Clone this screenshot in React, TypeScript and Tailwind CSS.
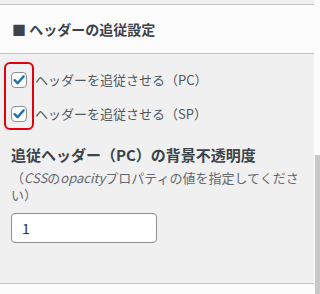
import { FC } from 'react';

const font = { fontFamily: '"Noto Sans CJK JP", "Noto Sans", sans-serif' };

const Check: FC<{ label: string }> = ({ label }) => (
  <label className="flex items-center h-[34px]">
    <span className="flex items-center justify-center w-[16px] h-[16px] ml-[11px] bg-white border border-[#8c8f94] rounded-[4px]">
      <svg width="14" height="14" viewBox="0 0 14 14">
        <path d="M2.6 7.2 L5.6 10.2 L11.6 3.4" fill="none" stroke="#2271b1" strokeWidth="2.4" strokeLinecap="round" strokeLinejoin="round" />
      </svg>
    </span>
    <span className="ml-[8px] text-[13px] text-[#50575e]">{label}</span>
  </label>
);

export default function App() {
  return (
    <div className="w-[320px] h-[294px] flex bg-[#fcfcfc] overflow-hidden" style={font}>
      <div className="w-[314px] flex flex-col relative">
        <div className="h-[5px] bg-[#f0f0f0] border-b border-[#c3c4c7]" />
        <div className="h-[49px] flex items-center pl-[12px] border-b border-[#c3c4c7] bg-[#fcfcfc]">
          <span className="text-[14px] font-bold text-[#3c434a]">■ ヘッダーの追従設定</span>
        </div>
        <div className="h-[230px] bg-[#f0f0f0] border-b border-[#c3c4c7] pt-[9px]">
          <Check label="ヘッダーを追従させる（PC）" />
          <Check label="ヘッダーを追従させる（SP）" />
          <div className="pl-[11px] pr-[10px] mt-[13px]">
            <div className="text-[15px] font-bold text-[#3c434a] leading-[22px]">追従ヘッダー（PC）の背景不透明度</div>
            <p className="text-[13px] text-[#646970] leading-[17px] mt-[3px]">
              （<i>CSS</i>の<i>opacity</i>プロパティの値を指定してください）
            </p>
            <div className="mt-[10px] w-[146px] h-[30px] bg-white border border-[#8c8f94] rounded-[4px] flex items-center pl-[10px] text-[14px] text-[#2c3338]">
              1
            </div>
          </div>
        </div>
        <div className="flex-1 bg-[#fcfcfc]" />
        <div className="absolute left-[4px] top-[62px] w-[30px] h-[68px] border-2 border-[#e4000f] rounded-[6px]" />
      </div>
      <div className="w-[6px] flex flex-col">
        <div className="h-[155px]" />
        <div className="flex-1 ml-[1px] w-[5px] bg-[#c8c8c8]" />
      </div>
    </div>
  );
}
